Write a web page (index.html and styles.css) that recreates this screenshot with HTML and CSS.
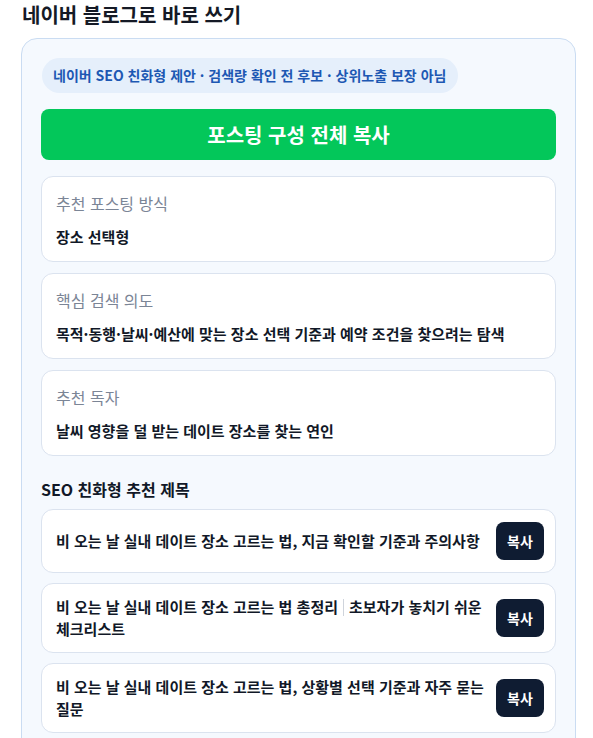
FILE: index.html
```html
<!DOCTYPE html>
<html lang="ko">
<head>
<meta charset="utf-8">
<link rel="stylesheet" href="styles.css">
</head>
<body>
<main class="page">
  <h1 class="page-title">네이버 블로그로 바로 쓰기</h1>
  <section class="panel">
    <div class="pill">네이버 SEO 친화형 제안 · 검색량 확인 전 후보 · 상위노출 보장 아님</div>
    <button class="copy-all">포스팅 구성 전체 복사</button>
    <div class="info-card">
      <div class="info-label">추천 포스팅 방식</div>
      <div class="info-value">장소 선택형</div>
    </div>
    <div class="info-card">
      <div class="info-label">핵심 검색 의도</div>
      <div class="info-value">목적·동행·날씨·예산에 맞는 장소 선택 기준과 예약 조건을 찾으려는 탐색</div>
    </div>
    <div class="info-card">
      <div class="info-label">추천 독자</div>
      <div class="info-value">날씨 영향을 덜 받는 데이트 장소를 찾는 연인</div>
    </div>
    <h2 class="section-title">SEO 친화형 추천 제목</h2>
    <div class="title-list">
      <div class="title-card">
        <div class="title-text">비 오는 날 실내 데이트 장소 고르는 법, 지금 확인할 기준과 주의사항</div>
        <button class="copy-btn">복사</button>
      </div>
      <div class="title-card">
        <div class="title-text">비 오는 날 실내 데이트 장소 고르는 법 총정리<span class="bar"></span>초보자가 놓치기 쉬운 체크리스트</div>
        <button class="copy-btn">복사</button>
      </div>
      <div class="title-card">
        <div class="title-text">비 오는 날 실내 데이트 장소 고르는 법, 상황별 선택 기준과 자주 묻는 질문</div>
        <button class="copy-btn">복사</button>
      </div>
    </div>
  </section>
</main>
</body>
</html>
```
FILE: styles.css
```css
* { box-sizing: border-box; }
html, body { margin: 0; padding: 0; background: #ffffff; }
body {
  font-family: "Noto Sans CJK KR", "Noto Sans", sans-serif;
  color: #111827;
  word-break: keep-all;
}
.page {
  width: 555px;
  margin-left: 21px;
  padding-top: 1px;
}
.page-title {
  margin: 0 0 10px 1px;
  font-size: 20px;
  line-height: 27px;
  font-weight: 700;
  color: #151a26;
}
.panel {
  border: 1px solid #cadcf2;
  border-radius: 16px;
  background: #f5f9fe;
  padding: 19px 19px 20px 19px;
  display: flex;
  flex-direction: column;
}
.pill {
  align-self: flex-start;
  margin-left: 1px;
  height: 35px;
  line-height: 35px;
  padding: 0 12px 0 11px;
  border-radius: 18px;
  background: #e5effb;
  color: #1d58b3;
  font-size: 14px;
  font-weight: 700;
  white-space: nowrap;
}
.copy-all {
  margin-top: 16px;
  height: 51px;
  border: none;
  border-radius: 8px;
  background: #03c75a;
  color: #ffffff;
  font-family: inherit;
  font-size: 20px;
  font-weight: 700;
}
.info-card {
  margin-top: 16px;
  background: #ffffff;
  border: 1px solid #dbe3ef;
  border-radius: 12px;
  padding: 15px 14px 13px 14px;
  display: flex;
  flex-direction: column;
  gap: 11px;
}
.info-card + .info-card { margin-top: 11px; }
.info-label {
  font-size: 16px;
  line-height: 23px;
  color: #7b8596;
}
.info-value {
  font-size: 15px;
  line-height: 22px;
  font-weight: 700;
  color: #111827;
}
.section-title {
  margin: 22px 0 9px 0;
  font-size: 16px;
  line-height: 22px;
  font-weight: 700;
  color: #111827;
}
.title-list {
  display: flex;
  flex-direction: column;
  gap: 10px;
}
.title-card {
  background: #ffffff;
  border: 1px solid #dbe3ef;
  border-radius: 12px;
  padding: 12px 11px 12px 14px;
  display: flex;
  align-items: center;
  gap: 12px;
}
.title-text {
  flex: 1;
  font-size: 15px;
  line-height: 22px;
  font-weight: 700;
  color: #111827;
}
.bar {
  display: inline-block;
  width: 1px;
  height: 17px;
  margin: 0 5px -3px 5px;
  background: #cfd4dc;
}
.copy-btn {
  flex: none;
  width: 48px;
  height: 38px;
  border: none;
  border-radius: 8px;
  background: #0f1c32;
  color: #ffffff;
  font-family: inherit;
  font-size: 14px;
  font-weight: 700;
}
```
